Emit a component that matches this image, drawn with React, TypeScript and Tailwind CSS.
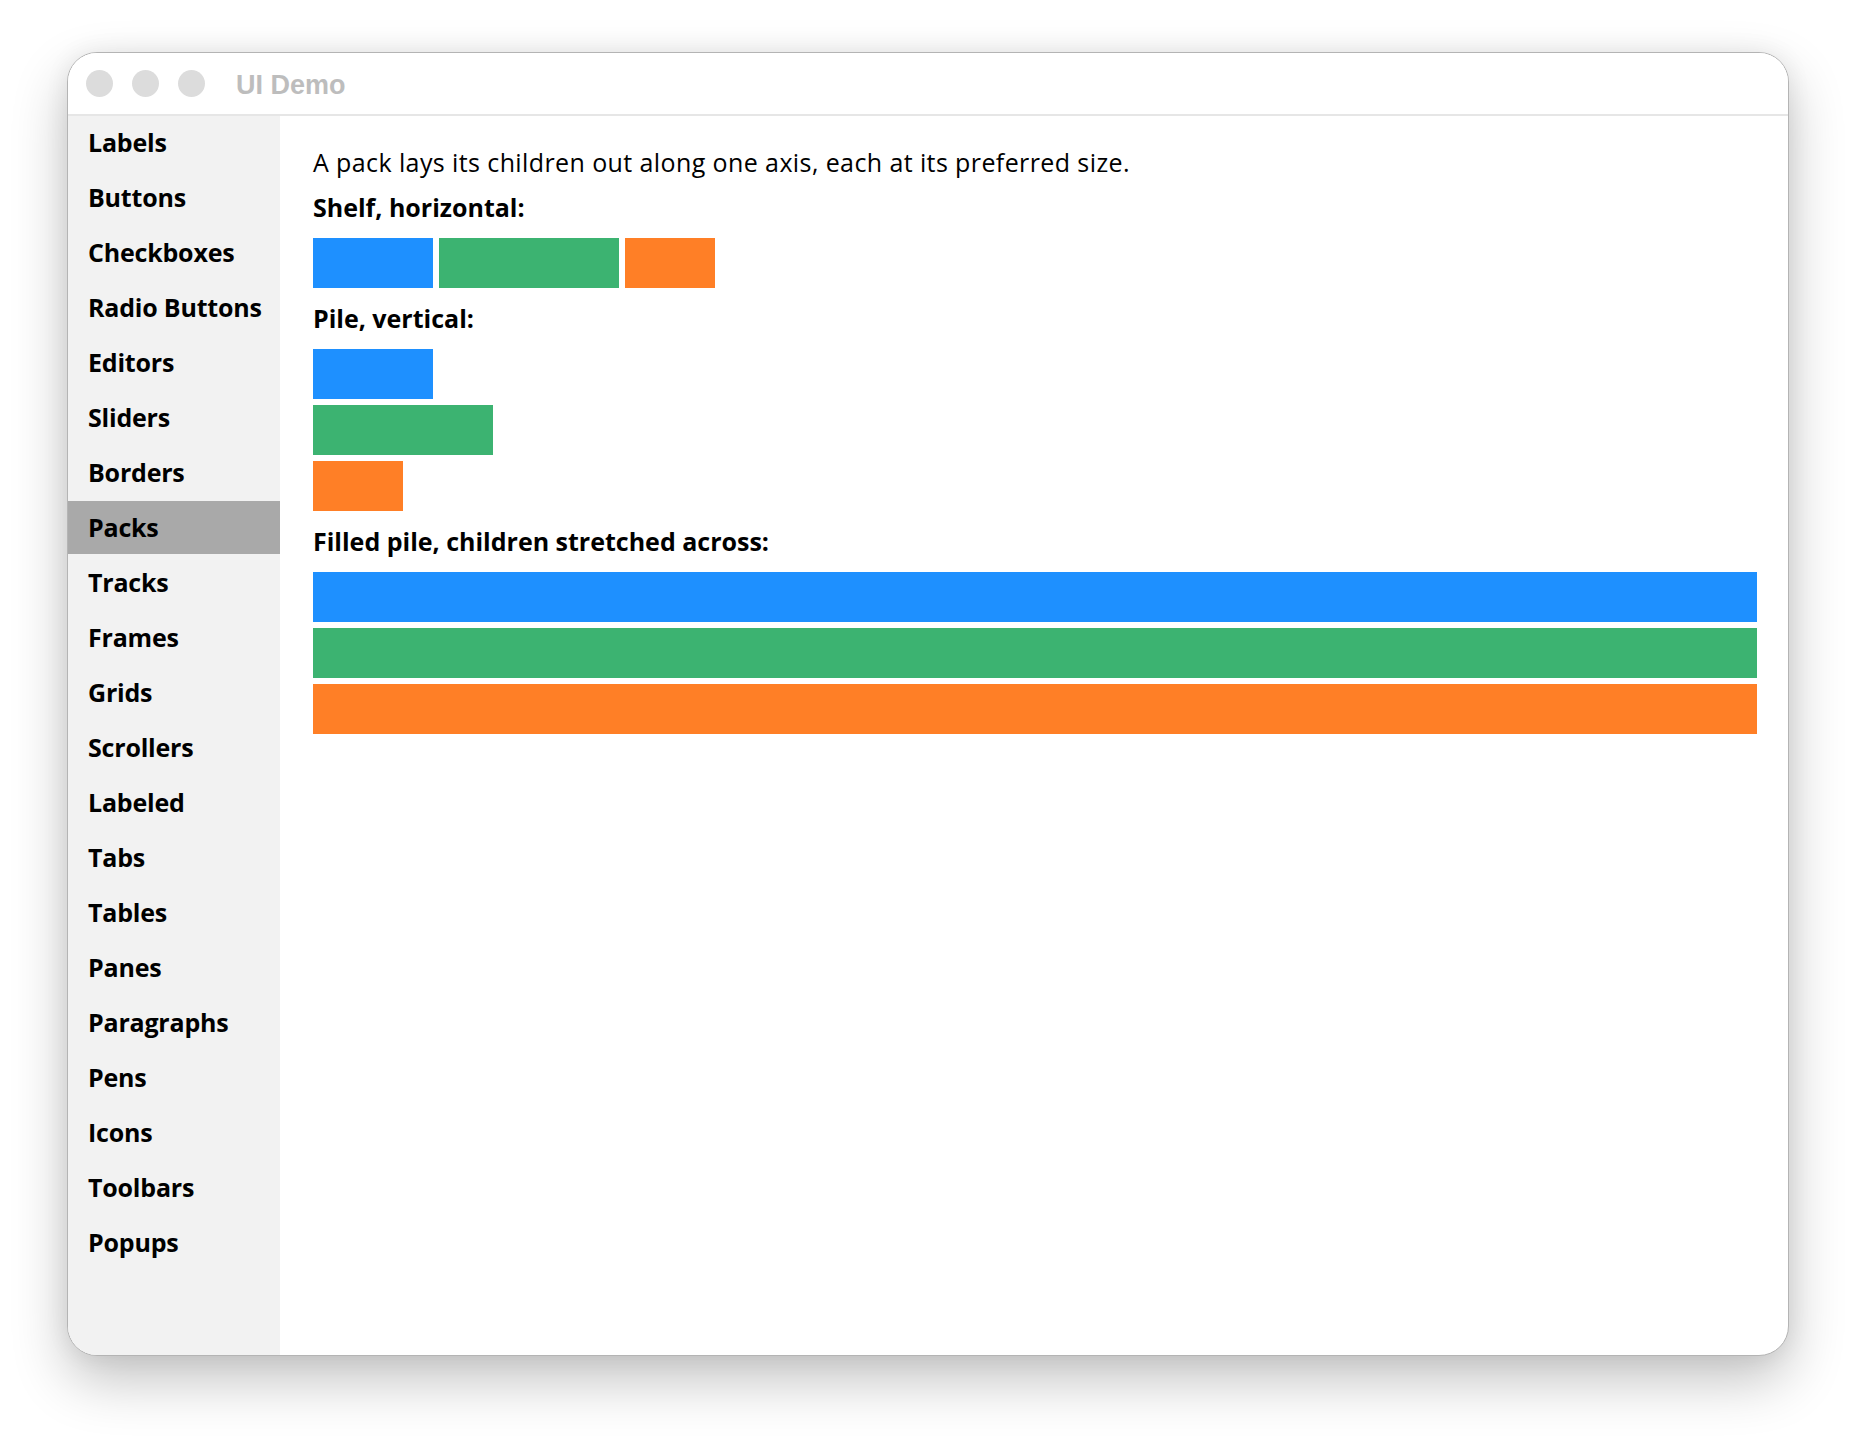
const navItems = [
  "Labels",
  "Buttons",
  "Checkboxes",
  "Radio Buttons",
  "Editors",
  "Sliders",
  "Borders",
  "Packs",
  "Tracks",
  "Frames",
  "Grids",
  "Scrollers",
  "Labeled",
  "Tabs",
  "Tables",
  "Panes",
  "Paragraphs",
  "Pens",
  "Icons",
  "Toolbars",
  "Popups",
];

const BLUE = "bg-[#1e90ff]";
const GREEN = "bg-[#3cb371]";
const ORANGE = "bg-[#ff7f26]";

const App = () => {
  const active = "Packs";

  return (
    <div className="w-full h-[1440px] bg-white flex justify-center pt-[52px]">
      <div className="w-[1722px] h-[1304px] flex flex-col rounded-[30px] border border-[#b4b4b4] bg-white overflow-hidden shadow-[0_24px_55px_rgba(0,0,0,0.24),0_0_24px_rgba(0,0,0,0.07)]">
        {/* Title bar */}
        <div className="h-[63px] shrink-0 flex items-center pl-[18px] border-b-2 border-[#e6e6e6] bg-white">
          <div className="flex items-center gap-[19px]">
            <span className="w-[27px] h-[27px] rounded-full bg-[#dcdcdc]" />
            <span className="w-[27px] h-[27px] rounded-full bg-[#dcdcdc]" />
            <span className="w-[27px] h-[27px] rounded-full bg-[#dcdcdc]" />
          </div>
          <span className="ml-[31px] mt-[3px] text-[27px] font-bold text-[#bdbdbd] font-['Liberation_Sans',Arial,sans-serif]">
            UI Demo
          </span>
        </div>

        <div className="flex flex-1 min-h-0 font-['Open_Sans',sans-serif] text-[25px] text-black">
          {/* Sidebar */}
          <div className="w-[212px] shrink-0 bg-[#f2f2f2] flex flex-col gap-[2px]">
            {navItems.map((item) => (
              <div
                key={item}
                className={`h-[53px] pl-5 font-bold leading-[53px] tracking-[-0.2px] whitespace-nowrap ${
                  item === active ? "bg-[#a9a9a9]" : ""
                }`}
              >
                {item}
              </div>
            ))}
          </div>

          {/* Content */}
          <div className="flex-1 flex flex-col pl-[33px] pr-[31px] pt-[29px]">
            <p className="leading-[34px] tracking-[0.4px]">
              A pack lays its children out along one axis, each at its preferred size.
            </p>

            <div className="mt-[4px] leading-[49px] font-bold">Shelf, horizontal:</div>
            <div className="mt-[6px] flex gap-[6px]">
              <div className={`w-[120px] h-[50px] ${BLUE}`} />
              <div className={`w-[180px] h-[50px] ${GREEN}`} />
              <div className={`w-[90px] h-[50px] ${ORANGE}`} />
            </div>

            <div className="mt-[6px] leading-[49px] font-bold">Pile, vertical:</div>
            <div className="mt-[6px] flex flex-col items-start gap-[6px]">
              <div className={`w-[120px] h-[50px] ${BLUE}`} />
              <div className={`w-[180px] h-[50px] ${GREEN}`} />
              <div className={`w-[90px] h-[50px] ${ORANGE}`} />
            </div>

            <div className="mt-[6px] leading-[49px] font-bold">
              Filled pile, children stretched across:
            </div>
            <div className="mt-[6px] flex flex-col gap-[6px]">
              <div className={`h-[50px] ${BLUE}`} />
              <div className={`h-[50px] ${GREEN}`} />
              <div className={`h-[50px] ${ORANGE}`} />
            </div>
          </div>
        </div>
      </div>
    </div>
  );
};

export default App;
